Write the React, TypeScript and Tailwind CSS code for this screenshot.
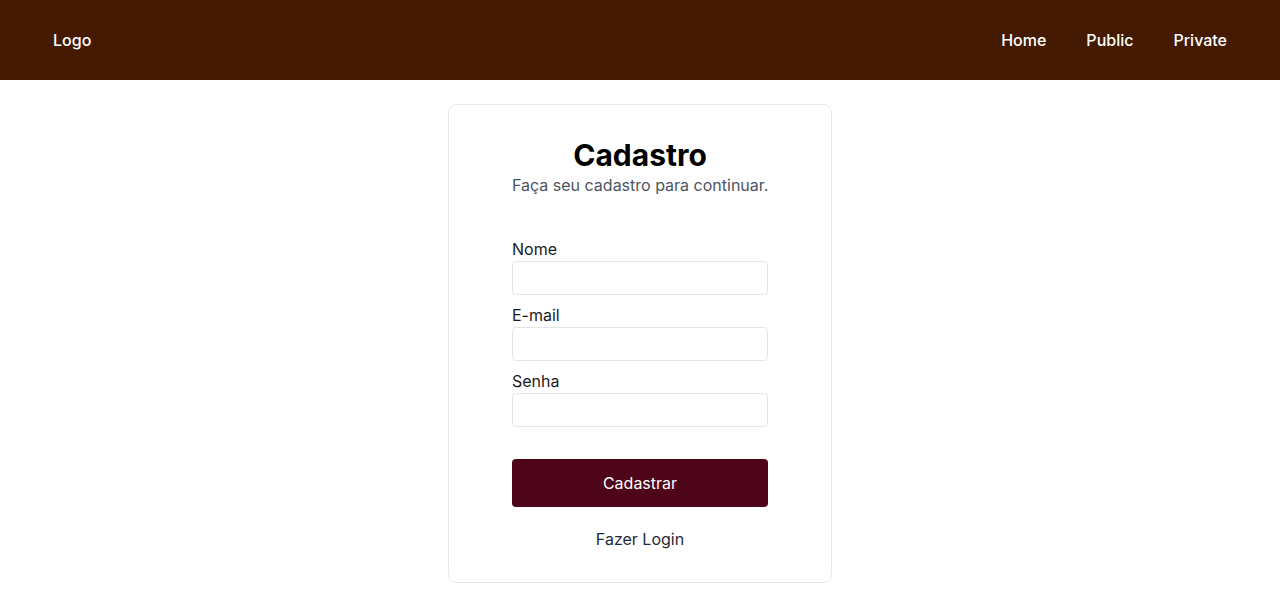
export default function App() {
  return (
    <div className="min-h-screen bg-white font-['Inter',sans-serif] text-[#111]">
      <header className="h-20 bg-[#441b02] flex items-center justify-between px-[53px]">
        <a href="#" className="text-white font-medium text-base">
          Logo
        </a>
        <nav className="flex items-center gap-10">
          <a href="#" className="text-white font-medium text-base">Home</a>
          <a href="#" className="text-white font-medium text-base">Public</a>
          <a href="#" className="text-white font-medium text-base">Private</a>
        </nav>
      </header>

      <main className="flex justify-center pt-6">
        <div className="w-96 border border-gray-200 rounded-lg px-[63px] pt-8 pb-[31px]">
          <div className="text-center">
            <h1 className="text-3xl font-bold text-black">Cadastro</h1>
            <p className="text-base text-[#4b5563] whitespace-nowrap">Faça seu cadastro para continuar.</p>
          </div>

          <form className="mt-10 flex flex-col gap-2">
            {["Nome", "E-mail", "Senha"].map((label) => (
              <div key={label} className="flex flex-col">
                <label className="text-base text-[#1a1a1a]">{label}</label>
                <input
                  type={label === "Senha" ? "password" : "text"}
                  className="h-[34px] border border-[#e5e5e5] rounded px-3 outline-none"
                />
              </div>
            ))}
            <button
              type="button"
              className="mt-6 h-12 bg-[#4f0519] text-white rounded text-base"
            >
              Cadastrar
            </button>
          </form>

          <div className="mt-5 text-center">
            <a href="#" className="text-base text-[#1f2937]">Fazer Login</a>
          </div>
        </div>
      </main>
    </div>
  );
}
